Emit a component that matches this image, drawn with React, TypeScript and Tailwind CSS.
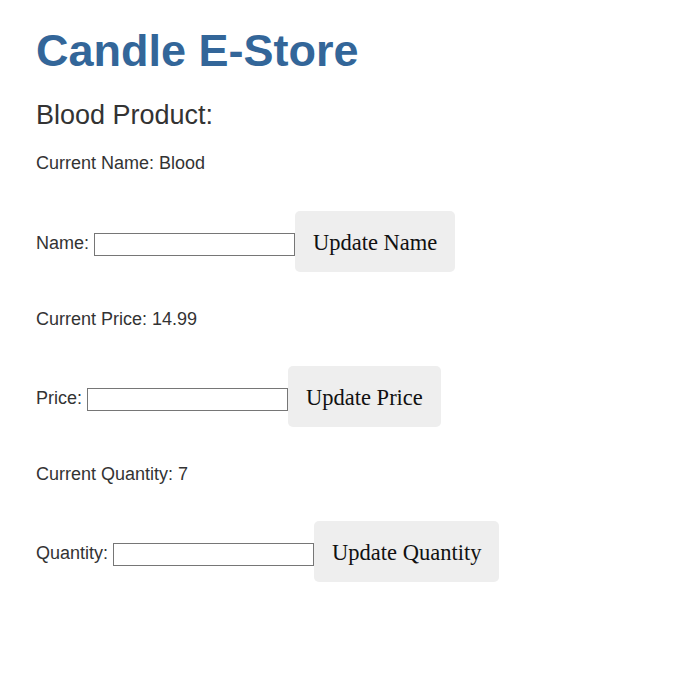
import React from "react";

function Row({ label, button, mt }: { label: string; button: string; mt: string }) {
  return (
    <div className={`flex items-center ${mt}`}>
      <span className="mt-[3px] mr-[5px]">{label}</span>
      <input
        type="text"
        className="mt-[6px] w-[201px] h-[23px] border border-[#767676] bg-white px-[2px] text-[13px] outline-none"
      />
      <button
        className="h-[61px] px-[18px] pt-[3px] rounded-[5px] bg-[#eeeeee] text-[22.5px] text-[#111] leading-none"
        style={{ fontFamily: '"Liberation Serif", "DejaVu Serif", serif' }}
      >
        {button}
      </button>
    </div>
  );
}

export default function App() {
  return (
    <div
      className="min-h-[677px] w-full bg-white pl-[36px] pt-[25px] text-[18px] text-[#333333]"
      style={{ fontFamily: '"Liberation Sans", Arial, sans-serif' }}
    >
      <h1 className="text-[45px] font-bold leading-[52px] text-[#336699]">Candle E-Store</h1>
      <h2 className="mt-[23px] text-[27px] leading-[31px]">Blood Product:</h2>
      <p className="mt-[22px] leading-[21px]">Current Name: Blood</p>
      <Row label="Name:" button="Update Name" mt="mt-[37px]" />
      <p className="mt-[37px] leading-[21px]">Current Price: 14.99</p>
      <Row label="Price:" button="Update Price" mt="mt-[36px]" />
      <p className="mt-[37px] leading-[21px]">Current Quantity: 7</p>
      <Row label="Quantity:" button="Update Quantity" mt="mt-[36px]" />
    </div>
  );
}
